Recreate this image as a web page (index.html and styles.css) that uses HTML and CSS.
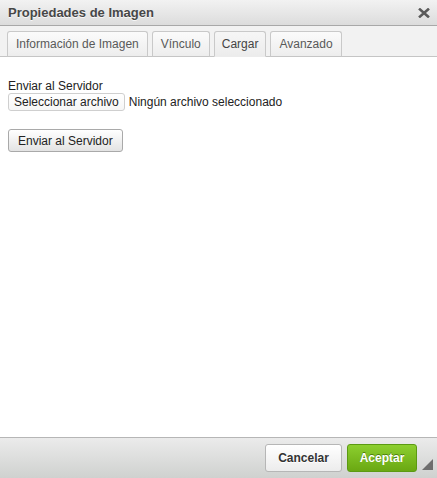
FILE: index.html
```html
<!DOCTYPE html>
<html lang="es">
<head>
<meta charset="utf-8">
<title>Propiedades de Imagen</title>
<link rel="stylesheet" href="styles.css">
</head>
<body>
<div class="dialog">
  <div class="titlebar">
    <span class="title">Propiedades de Imagen</span>
    <span class="close" aria-label="Cerrar">
      <svg width="12" height="10" viewBox="0 0 12 10"><path d="M2 1.5 L10 8.5 M10 1.5 L2 8.5" stroke="#5a5a5a" stroke-width="2.6" stroke-linecap="square" fill="none"/></svg>
    </span>
  </div>
  <div class="tabs">
    <div class="tab">Información de Imagen</div>
    <div class="tab">Vínculo</div>
    <div class="tab active">Cargar</div>
    <div class="tab">Avanzado</div>
  </div>
  <div class="content">
    <div class="label">Enviar al Servidor</div>
    <div class="filerow">
      <span class="filebtn">Seleccionar archivo</span>
      <span class="filename">Ningún archivo seleccionado</span>
    </div>
    <div class="sendrow">
      <span class="sendbtn">Enviar al Servidor</span>
    </div>
  </div>
  <div class="footer">
    <span class="btn cancel">Cancelar</span>
    <span class="btn ok">Aceptar</span>
    <span class="grip"></span>
  </div>
</div>
</body>
</html>
```
FILE: styles.css
```css
* { box-sizing: border-box; }
html, body { margin: 0; padding: 0; }
body {
  font-family: "Liberation Sans", Arial, sans-serif;
  font-size: 12px;
  color: #222;
  background: #fff;
}
.dialog {
  width: 437px;
  height: 478px;
  display: flex;
  flex-direction: column;
  position: relative;
}
.titlebar {
  height: 26px;
  flex: none;
  display: flex;
  align-items: center;
  justify-content: space-between;
  padding: 0 7px 0 8px;
  background: linear-gradient(#f2f2f2, #dcdcdc);
  border-bottom: 1px solid #a8a8a8;
}
.title {
  font-weight: bold;
  font-size: 13px;
  color: #474747;
  text-shadow: 0 1px 0 rgba(255,255,255,0.75);
}
.close {
  display: flex;
}
.tabs {
  height: 31px;
  flex: none;
  display: flex;
  align-items: flex-end;
  gap: 4px;
  padding: 0 0 0 7px;
  background: #f2f2f2;
  border-bottom: 1px solid #c5c5c5;
}
.tab {
  height: 26px;
  margin-bottom: -1px;
  padding: 0 8px;
  display: flex;
  align-items: center;
  color: #595959;
  font-size: 12px;
  background: linear-gradient(#fbfbfb, #ededed);
  border: 1px solid #c9c9c9;
  border-bottom-color: #c5c5c5;
  border-radius: 3px 3px 0 0;
}
.tab.active {
  background: linear-gradient(#f6f6f6, #ececec);
  border-bottom-color: #ececec;
  padding: 0 7px;
  color: #444;
}
.content {
  flex: 1;
  padding: 22px 8px 0 8px;
  background: #fff;
}
.label {
  line-height: 14px;
  color: #222;
}
.filerow {
  display: flex;
  align-items: center;
  gap: 4px;
}
.filebtn {
  height: 18px;
  display: flex;
  align-items: center;
  padding: 0 5px;
  border: 1px solid #cfcfcf;
  border-radius: 3px;
  background: linear-gradient(#ffffff, #f6f6f6);
  color: #222;
}
.filename { color: #222; }
.sendrow {
  display: flex;
  margin-top: 18px;
}
.sendbtn {
  height: 23px;
  display: flex;
  align-items: center;
  padding: 0 9px;
  border: 1px solid #a9a9a9;
  border-radius: 3px;
  background: linear-gradient(#ffffff, #e3e3e3);
  color: #222;
  font-size: 12px;
}
.footer {
  height: 41px;
  flex: none;
  display: flex;
  align-items: center;
  justify-content: flex-end;
  gap: 5px;
  padding: 0 20px 0 0;
  background: linear-gradient(#ebebeb, #cfd1cf);
  border-top: 1px solid #b6b6b6;
}
.btn {
  height: 28px;
  display: flex;
  align-items: center;
  justify-content: center;
  border-radius: 3px;
  font-weight: bold;
  font-size: 12px;
}
.cancel {
  width: 77px;
  color: #333;
  background: linear-gradient(#ffffff, #ececec);
  border: 1px solid #b6b6b6;
  text-shadow: 0 1px 0 #fff;
}
.ok {
  width: 70px;
  color: #fff;
  background: linear-gradient(#8ccf2f, #6aa812);
  border: 1px solid #5b9a12;
  text-shadow: 0 -1px 0 #4d7e0e;
}
.grip {
  position: absolute;
  right: 4px;
  bottom: 8px;
  width: 0;
  height: 0;
  border-left: 11px solid transparent;
  border-bottom: 11px solid #6e6e6e;
}
```
